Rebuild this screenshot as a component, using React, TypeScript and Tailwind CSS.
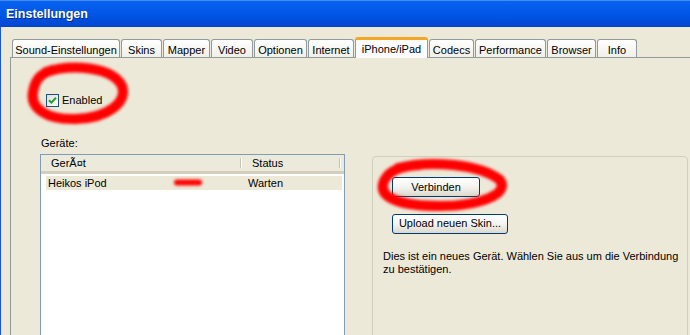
import React from "react";

const tabs = [
  { label: "Sound-Einstellungen", w: "w-[108px]" },
  { label: "Skins", w: "w-[41px]" },
  { label: "Mapper", w: "w-[47px]" },
  { label: "Video", w: "w-[42px]" },
  { label: "Optionen", w: "w-[53px]" },
  { label: "Internet", w: "w-[46px]" },
  { label: "iPhone/iPad", w: "w-[73px]", active: true },
  { label: "Codecs", w: "w-[45px]" },
  { label: "Performance", w: "w-[71px]" },
  { label: "Browser", w: "w-[49px]" },
  { label: "Info", w: "w-[40px]" },
];

function XpButton({ label, w }: { label: string; w: string }) {
  return (
    <button
      className={`${w} h-[20px] rounded-[3px] border border-[#003c74] bg-gradient-to-b from-[#ffffff] via-[#f3f3ef] to-[#dcd8cc] text-[11px] leading-none text-black`}
    >
      {label}
    </button>
  );
}

function Scribbles() {
  // red marker annotations drawn over the screenshot
  return (
    <svg className="pointer-events-none absolute left-0 top-0" width="690" height="335">
      <defs>
        <filter id="soft" x="-10%" y="-10%" width="120%" height="120%">
          <feGaussianBlur stdDeviation="1.4" />
        </filter>
      </defs>
      <g fill="none" stroke="#ff0000" strokeLinecap="round" filter="url(#soft)">
        <path
          d="M46 72 C 70 64, 112 66, 122 86 C 128 102, 108 118, 76 119 C 46 120, 30 108, 33 92 C 35 80, 40 74, 52 70"
          strokeWidth="10"
        />
        <path
          d="M398 168 C 430 160, 480 164, 500 180 C 510 194, 480 206, 440 206 C 400 206, 380 198, 383 184 C 386 172, 400 166, 420 165"
          strokeWidth="10"
        />
        <path d="M177 182.5 L 199 182.5" strokeWidth="6" />
      </g>
    </svg>
  );
}

export default function App() {
  return (
    <div className="relative h-[335px] w-[690px] overflow-hidden bg-[#ece9d8] font-['Liberation_Sans',Arial,sans-serif] text-black">
      {/* Title bar */}
      <div className="flex h-[27px] items-center border-t border-[#3d8df5] bg-gradient-to-b from-[#0a62ef] via-[#0056e6] to-[#0045d0] pl-[6px]">
        <span className="text-[12.5px] font-bold text-white [text-shadow:1px_1px_#0a2a8a]">
          Einstellungen
        </span>
      </div>

      <div className="flex h-[308px] flex-col border-l border-[#1a56dc] pt-[10px]">
        {/* Tabs */}
        <div className="flex h-[20px] items-end gap-px pl-[11px]">
          {tabs.map((t) =>
            t.active ? (
              <div
                key={t.label}
                className={`${t.w} relative z-10 -mb-px flex h-[21px] justify-center rounded-t-[3px] border-x border-t-[3px] border-x-[#919b9c] border-t-[#f5a623] bg-[#fcfcfe] pt-[1px] text-[11px]`}
              >
                {t.label}
              </div>
            ) : (
              <div
                key={t.label}
                className={`${t.w} flex h-[18px] items-center justify-center rounded-t-[3px] border-x border-t border-[#919b9c] bg-gradient-to-b from-[#ffffff] to-[#f0efe8] pt-[3px] text-[11px]`}
              >
                {t.label}
              </div>
            )
          )}
        </div>

        {/* Panel */}
        <div className="ml-[9px] flex-1 border-l border-t border-[#919b9c] pl-[29px] pt-[36px]">
          <div className="flex h-[13px] items-center pl-[6px]">
            <div className="flex h-[13px] w-[13px] items-center justify-center border border-[#1c5180] bg-gradient-to-br from-[#dcdcd7] to-[#ffffff]">
              <svg width="9" height="9" viewBox="0 0 9 9">
                <path d="M1 4.2 L3.4 6.6 L8 1.8" fill="none" stroke="#21a121" strokeWidth="2" />
              </svg>
            </div>
            <span className="ml-[3px] text-[11px] leading-[13px]">Enabled</span>
          </div>

          <div className="mt-[30px] pl-[1px] text-[11px] leading-[13px]">Geräte:</div>

          <div className="mt-[4px] flex">
            {/* Device list */}
            <div className="h-[200px] w-[305px] border border-[#7f9db9] bg-white text-[11px]">
              <div className="flex h-[19px] border-b-[3px] border-[#d2cebd] bg-[#ebeadb]">
                <div className="flex w-[199px] items-center pl-[10px]">GerÃ¤t</div>
                <div className="my-[3px] w-[2px] border-l border-r border-l-[#c7c5b2] border-r-white" />
                <div className="flex w-[97px] items-center pl-[10px]">Status</div>
                <div className="my-[3px] w-[2px] border-l border-r border-l-[#c7c5b2] border-r-white" />
              </div>
              <div className="ml-[5px] mt-[2px] flex h-[14px] w-[296px] items-center bg-[#ece9d8]">
                <span className="w-[194px] pl-[2px]">Heikos iPod</span>
                <span className="pl-[8px]">Warten</span>
              </div>
            </div>

            {/* Connection group */}
            <div className="ml-[27px] mt-[2px] h-[200px] w-[316px] rounded-[4px] border border-[#d0d0bf] pl-[10px] pt-[20px]">
              <div className="ml-[9px] flex flex-col items-start">
                <XpButton label="Verbinden" w="w-[88px]" />
                <div className="mt-[13px]">
                  <XpButton label="Upload neuen Skin..." w="w-[116px]" />
                </div>
              </div>
              <p className="mt-[16px] whitespace-nowrap text-[11px] leading-[13px]">
                Dies ist ein neues Gerät. Wählen Sie aus um die Verbindung
                <br />
                zu bestätigen.
              </p>
            </div>
          </div>
        </div>
      </div>

      <Scribbles />
    </div>
  );
}
